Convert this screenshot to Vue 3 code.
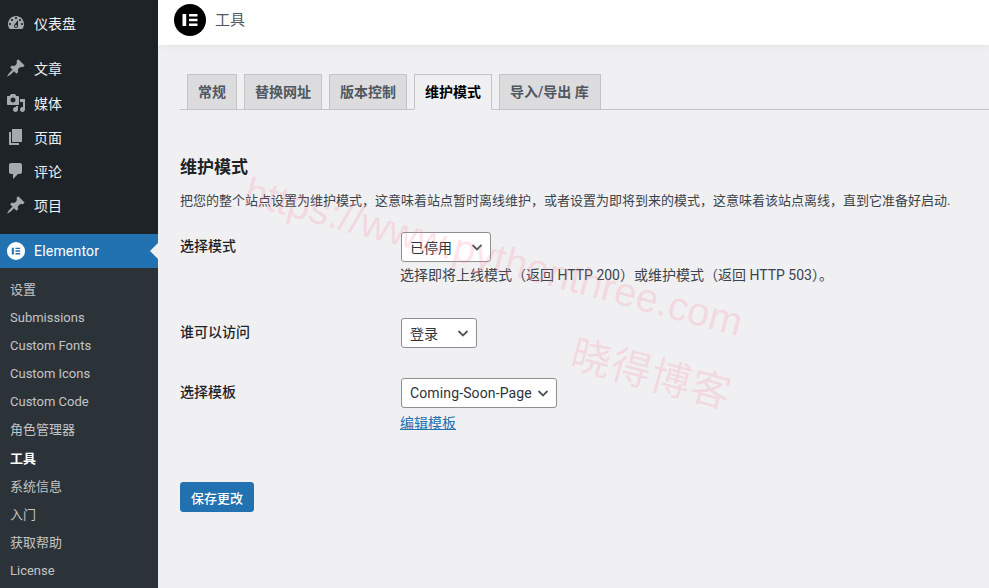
<script setup>
const top = [
  { label: '文章', d: 'M10.44 3.02l1.82-1.82 6.36 6.35-1.83 1.82c-1.05-.68-2.48-.57-3.41.36l-.75.75c-.92.93-1.04 2.35-.35 3.41l-1.83 1.82-2.41-2.41-2.8 2.79c-.42.42-3.38 2.71-3.8 2.29s1.86-3.39 2.28-3.81l2.79-2.79L4.1 9.36l1.83-1.82c1.05.69 2.48.57 3.4-.36l.75-.75c.93-.92 1.05-2.35.36-3.41z' },
  { label: '媒体', d: 'M13 11V4c0-.55-.45-1-1-1h-1.67L9 1H5L3.67 3H2c-.55 0-1 .45-1 1v7c0 .55.45 1 1 1h10c.55 0 1-.45 1-1zM7 4.5c1.38 0 2.5 1.12 2.5 2.5S8.38 9.5 7 9.5 4.5 8.38 4.5 7 5.62 4.5 7 4.5zM14 6h5v10.5c0 1.38-1.12 2.5-2.5 2.5S14 17.88 14 16.5s1.12-2.5 2.5-2.5c.17 0 .34.02.5.05V9h-3V6zm-4 8.05V13h2v3.5c0 1.38-1.12 2.5-2.5 2.5S7 17.88 7 16.5 8.12 14 9.5 14c.17 0 .34.02.5.05z' },
  { label: '页面', d: 'M6 15V2h10v13H6zm-1 1h8v2H3V5h2v11z' },
  { label: '评论', d: 'M5 2h9c1.1 0 2 .9 2 2v7c0 1.1-.9 2-2 2h-2l-5 5v-5H5c-1.1 0-2-.9-2-2V4c0-1.1.9-2 2-2z' },
  { label: '项目', d: 'M10.44 3.02l1.82-1.82 6.36 6.35-1.83 1.82c-1.05-.68-2.48-.57-3.41.36l-.75.75c-.92.93-1.04 2.35-.35 3.41l-1.83 1.82-2.41-2.41-2.8 2.79c-.42.42-3.38 2.71-3.8 2.29s1.86-3.39 2.28-3.81l2.79-2.79L4.1 9.36l1.83-1.82c1.05.69 2.48.57 3.4-.36l.75-.75c.93-.92 1.05-2.35.36-3.41z' }
]
const dash = 'M3.76 16h12.48c1.1-1.37 1.76-3.11 1.76-5 0-4.42-3.58-8-8-8s-8 3.58-8 8c0 1.89.66 3.63 1.76 5zM10 4c.55 0 1 .45 1 1s-.45 1-1 1-1-.45-1-1 .45-1 1-1zM6 6c.55 0 1 .45 1 1s-.45 1-1 1-1-.45-1-1 .45-1 1-1zm8 0c.55 0 1 .45 1 1s-.45 1-1 1-1-.45-1-1 .45-1 1-1zm-5.37 5.55L12 7v6c0 1.1-.9 2-2 2s-2-.9-2-2c0-.57.24-1.08.63-1.45zM4 10c.55 0 1 .45 1 1s-.45 1-1 1-1-.45-1-1 .45-1 1-1zm12 0c.55 0 1 .45 1 1s-.45 1-1 1-1-.45-1-1 .45-1 1-1zm-5 3c0-.55-.45-1-1-1s-1 .45-1 1 .45 1 1 1 1-.45 1-1z'
const sub = ['设置', 'Submissions', 'Custom Fonts', 'Custom Icons', 'Custom Code', '角色管理器', '工具', '系统信息', '入门', '获取帮助', 'License']
const tabs = ['常规', '替换网址', '版本控制', '维护模式', '导入/导出 库']
const eMark = 'M8.5 10h3.700v12H8.500zM15 10h8.500v2.600H15zM15 14.700h8.500v2.600H15zM15 19.400h8.500V22H15z'
</script>

<template>
  <div class="page">
    <aside class="side">
      <div class="item">
        <svg class="ico" viewBox="0 0 20 20"><path :d="dash" /></svg>
        <span>仪表盘</span>
      </div>
      <div class="group">
        <div v-for="m in top" :key="m.label" class="item">
          <svg class="ico" viewBox="0 0 20 20"><path :d="m.d" /></svg>
          <span>{{ m.label }}</span>
        </div>
      </div>
      <div class="item current">
        <svg class="eico" viewBox="0 0 32 32">
          <circle cx="16" cy="16" r="16" fill="#fff" />
          <path fill="#2271b1" :d="eMark" />
        </svg>
        <span>Elementor</span>
        <i class="notch"></i>
      </div>
      <ul class="submenu">
        <li v-for="s in sub" :key="s" :class="{ on: s === '工具' }">{{ s }}</li>
      </ul>
    </aside>

    <div class="main">
      <header class="bar">
        <svg class="logo" viewBox="0 0 32 32">
          <circle cx="16" cy="16" r="16" fill="#000" />
          <path fill="#fff" :d="eMark" />
        </svg>
        <span class="bar-title">工具</span>
      </header>

      <div class="content">
        <nav class="tabs">
          <span v-for="t in tabs" :key="t" class="tab" :class="{ active: t === '维护模式' }">{{ t }}</span>
        </nav>

        <h2>维护模式</h2>
        <p class="lead">把您的整个站点设置为维护模式，这意味着站点暂时离线维护，或者设置为即将到来的模式，这意味着该站点离线，直到它准备好启动.</p>

        <div class="form">
          <div class="label">选择模式</div>
          <div class="field f1">
            <div class="select w1">
              <span>已停用</span>
              <svg viewBox="0 0 16 16"><path d="M3.500 6l4.500 4.500L12.500 6" /></svg>
            </div>
            <p class="help">选择即将上线模式（返回 HTTP 200）或维护模式（返回 HTTP 503）。</p>
          </div>
          <div class="label">谁可以访问</div>
          <div class="field f2">
            <div class="select w2">
              <span>登录</span>
              <svg viewBox="0 0 16 16"><path d="M3.500 6l4.500 4.500L12.500 6" /></svg>
            </div>
          </div>
          <div class="label">选择模板</div>
          <div class="field">
            <div class="select w3">
              <span>Coming-Soon-Page</span>
              <svg viewBox="0 0 16 16"><path d="M3.500 6l4.500 4.500L12.500 6" /></svg>
            </div>
            <a class="link">编辑模板</a>
          </div>
        </div>

        <button class="save">保存更改</button>
      </div>
    </div>

    <div class="wm wm-url">https://www.pythonthree.com</div>
    <div class="wm wm-cn">晓得博客</div>
  </div>
</template>

<style>
html, body { margin: 0; height: 100%; overflow: hidden; background: #f0f0f2; }
</style>

<style scoped>
.page {
  position: relative;
  display: flex;
  height: 588px;
  overflow: hidden;
  background: #f0f0f2;
  font-family: Roboto, "Noto Sans CJK SC", sans-serif;
  font-size: 14px;
  color: #3c434a;
}
.side {
  width: 158px;
  flex: none;
  display: flex;
  flex-direction: column;
  background: #1d2327;
  padding-top: 6px;
  box-sizing: border-box;
}
.item {
  position: relative;
  display: flex;
  align-items: center;
  height: 34.25px;
  color: #f0f0f1;
  flex: none;
}
.group { margin-top: 11px; margin-bottom: 11px; }
.ico { width: 20px; height: 20px; margin: 0 8px 0 6px; fill: #a7aaad; flex: none; }
.current { background: #2271b1; color: #fff; height: 34px; letter-spacing: .2px; }
.eico { width: 18px; height: 18px; margin: 0 9px 0 7px; flex: none; }
.notch {
  position: absolute;
  right: 0;
  top: 9px;
  border: 8px solid transparent;
  border-right-color: #f0f0f1;
  border-left-width: 0;
}
.submenu {
  flex: 1;
  list-style: none;
  margin: 0;
  padding: 8px 0 0 10px;
  background: #2c3338;
  font-size: 13px;
  color: #c3c4c7;
}
.submenu li { height: 28.2px; line-height: 27px; }
.submenu .on { color: #fff; font-weight: 600; }

.main { flex: 1; min-width: 0; }
.bar {
  height: 45px;
  display: flex;
  align-items: center;
  padding: 0 0 5px 16px;
  box-sizing: border-box;
  background: #fff;
  box-shadow: 0 1px 8px rgba(0, 0, 0, .06);
}
.logo { width: 32px; height: 32px; margin-right: 9px; }
.bar-title { font-size: 15px; line-height: 20px; color: #50575e; }

.content { padding: 29px 0 0 22px; }
.tabs {
  display: flex;
  gap: 7px;
  padding-left: 7px;
  height: 36px;
  box-sizing: border-box;
  border-bottom: 1px solid #c3c4c7;
}
.tab {
  height: 36px;
  box-sizing: border-box;
  padding: 0 10px;
  line-height: 35px;
  font-weight: 600;
  color: #50575e;
  background: #dcdcde;
  border: 1px solid #c3c4c7;
}
.tab:last-child { padding-right: 11px; }
.tab.active { background: #f0f0f2; color: #000; border-bottom-color: #f0f0f2; }

h2 {
  margin: 45px 0 0;
  font-size: 17px;
  line-height: 24px;
  font-weight: 600;
  color: #1d2327;
}
.lead { margin: 12px 0 0; font-size: 13px; line-height: 20px; }

.form {
  display: grid;
  grid-template-columns: 220px 1fr;
  margin-top: 21px;
}
.label { padding-top: 4px; line-height: 20px; font-weight: 500; color: #1d2327; }
.field { display: flex; flex-direction: column; align-items: flex-start; }
.f1 { height: 86px; }
.f2 { height: 60px; }
.select {
  display: flex;
  align-items: center;
  justify-content: space-between;
  box-sizing: border-box;
  height: 30px;
  margin-left: 1px;
  padding: 0 5px 1px 8px;
  background: #fff;
  border: 1px solid #8c8f94;
  border-radius: 3px;
  color: #2c3338;
}
.select svg { width: 16px; height: 16px; fill: none; stroke: #50575e; stroke-width: 1.800; }
.w1 { width: 90px; }
.w2 { width: 76px; }
.w3 { width: 156px; letter-spacing: .13px; }
.help { margin: 3px 0 0; line-height: 20px; }
.link { margin-top: 5px; line-height: 20px; color: #2271b1; text-decoration: underline; }

.save {
  display: block;
  margin-top: 49px;
  width: 74px;
  height: 30px;
  padding: 0;
  border: 1px solid #2271b1;
  border-radius: 3px;
  background: #2271b1;
  color: #fff;
  font: inherit;
  font-size: 13px;
  font-weight: 500;
}

.wm {
  position: absolute;
  white-space: nowrap;
  color: rgba(255, 120, 150, .2);
  pointer-events: none;
  transform-origin: 0 50%;
  line-height: 40px;
  font-size: 40px;
  transform: rotate(15deg);
}
.wm-url {
  left: 246px;
  top: 170px;
  font-family: "Liberation Sans", sans-serif;
}
.wm-cn {
  left: 573px;
  top: 330px;
  font-family: "Noto Sans CJK SC", sans-serif;
  letter-spacing: 1px;
}
</style>
